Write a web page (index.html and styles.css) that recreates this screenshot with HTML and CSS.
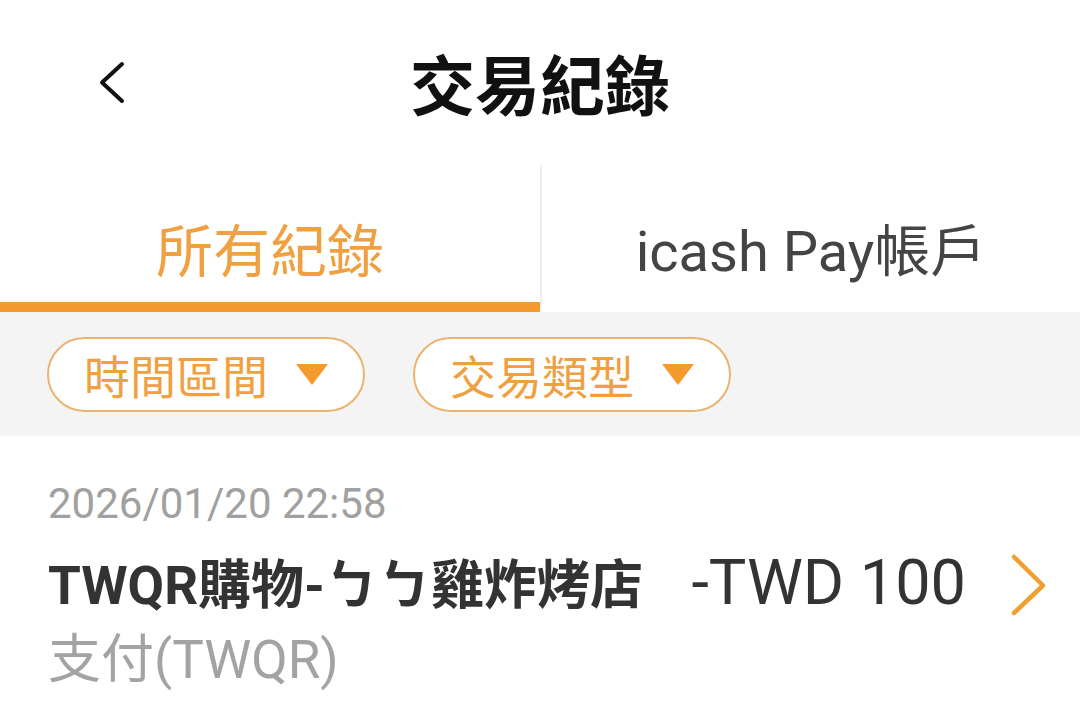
FILE: index.html
```html
<!DOCTYPE html>
<html lang="zh-Hant">
<head>
<meta charset="UTF-8" />
<meta name="viewport" content="width=device-width, initial-scale=1" />
<title>交易紀錄</title>
<link rel="stylesheet" href="styles.css">
</head>
<body>

<div class="top-bar">
  <button class="back-btn" aria-label="返回">
    <svg width="40" height="60" viewBox="0 0 40 60">
      <polyline points="31,11 11,29.5 31,48" fill="none" stroke="#111" stroke-width="4" stroke-linecap="round" stroke-linejoin="round" />
    </svg>
  </button>
  <h1 class="title">交易紀錄</h1>
  <div></div>
</div>

<div class="tabs">
  <div class="tab active">所有紀錄</div>
  <div class="tab">icash Pay帳戶</div>
</div>

<div class="filters">
  <button class="pill">時間區間 <span class="caret"></span></button>
  <button class="pill">交易類型 <span class="caret"></span></button>
</div>

<div class="record">
  <p class="record-date">2026/01/20 22:58</p>
  <div class="record-row">
    <span class="record-name">TWQR購物-ㄅㄅ雞炸烤店</span>
    <span class="record-amount">-TWD 100</span>
    <svg class="record-arrow" width="44" height="64" viewBox="0 0 44 64">
      <polyline points="8,4 37,32.5 8,60" fill="none" stroke="#f0a030" stroke-width="4.5" stroke-linecap="round" stroke-linejoin="round" />
    </svg>
  </div>
  <p class="record-type">支付(TWQR)</p>
</div>

</body>
</html>
```

FILE: styles.css
```css
body {
  margin: 0;
  padding: 0;
  background-color: #fff;
  font-family: Roboto, "Noto Sans CJK TC", sans-serif;
  color: #333;
}

.top-bar {
  display: grid;
  grid-template-columns: 1fr auto 1fr;
  align-items: center;
  height: 165px;
  padding-top: 10px;
  box-sizing: border-box;
}

.back-btn {
  justify-self: start;
  margin-left: 91px;
  margin-top: -10px;
  padding: 0;
  border: none;
  background: none;
  display: flex;
}

.title {
  margin: 0;
  font-size: 65px;
  font-weight: 700;
  line-height: 80px;
  color: #111;
}

.tabs {
  display: grid;
  grid-template-columns: 1fr 1fr;
  height: 147px;
}

.tab {
  display: flex;
  align-items: center;
  justify-content: center;
  padding-top: 26px;
  font-size: 56px;
  color: #444;
  border-bottom: 10px solid transparent;
}

.tab + .tab {
  border-left: 2px solid #eeeeee;
}

.tab.active {
  font-size: 57px;
  color: #f0a040;
  border-bottom-color: #f59a2c;
}

.filters {
  display: flex;
  align-items: center;
  gap: 48px;
  height: 124px;
  padding: 0 47px;
  background-color: #f4f4f4;
}

.pill {
  display: flex;
  align-items: center;
  gap: 28px;
  height: 75px;
  padding: 0 35px;
  border: 2px solid #ebb370;
  border-radius: 40px;
  background: #fff;
  font-family: inherit;
  font-size: 46px;
  color: #f0a040;
}

.caret {
  width: 0;
  height: 0;
  border-left: 16px solid transparent;
  border-right: 16px solid transparent;
  border-top: 21px solid #f59a2c;
}

.record {
  padding: 40px 30px 0 48px;
}

.record-date {
  margin: 0;
  font-size: 42px;
  line-height: 56px;
  color: #a0a0a0;
}

.record-row {
  display: flex;
  align-items: baseline;
  margin-top: 15px;
}

.record-name {
  font-size: 53px;
  font-weight: 700;
  line-height: 72px;
  color: #333;
}

.record-amount {
  margin-left: auto;
  font-size: 63px;
  line-height: 72px;
  color: #333;
}

.record-arrow {
  align-self: center;
  margin-left: 40px;
}

.record-type {
  margin: 6px 0 0;
  font-size: 53px;
  line-height: 64px;
  color: #a3a3a3;
}
```
